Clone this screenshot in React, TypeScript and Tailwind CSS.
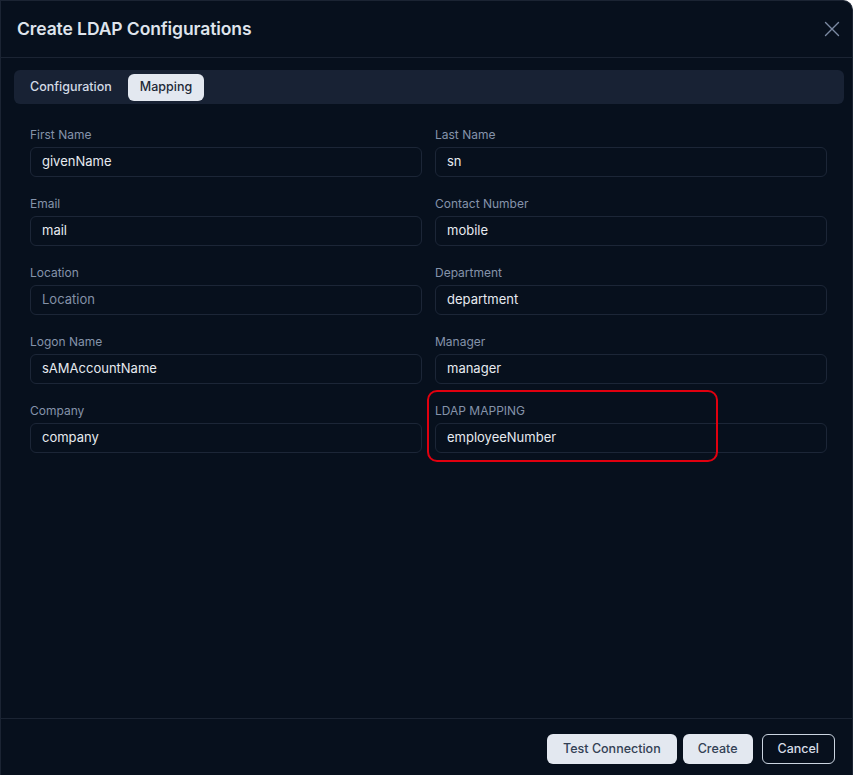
import React from "react";

const fields: { label: string; value: string; placeholder?: boolean }[][] = [
  [
    { label: "First Name", value: "givenName" },
    { label: "Last Name", value: "sn" },
  ],
  [
    { label: "Email", value: "mail" },
    { label: "Contact Number", value: "mobile" },
  ],
  [
    { label: "Location", value: "Location", placeholder: true },
    { label: "Department", value: "department" },
  ],
  [
    { label: "Logon Name", value: "sAMAccountName" },
    { label: "Manager", value: "manager" },
  ],
  [
    { label: "Company", value: "company" },
    { label: "LDAP MAPPING", value: "employeeNumber" },
  ],
];

function Field({ label, value, placeholder, highlight }: { label: string; value: string; placeholder?: boolean; highlight?: boolean }) {
  return (
    <div className="relative flex flex-col gap-[5px]">
      <label className="text-[12px] leading-[14px] text-[#8593aa]">{label}</label>
      <div className="h-[30px] rounded-md border border-[#1c2637] px-[11px] flex items-center">
        <span className={placeholder ? "text-[13px] text-[#8491a7]" : "text-[13px] text-[#e6eaf0]"}>{value}</span>
      </div>
      {highlight && (
        <div className="absolute left-[-8px] top-[-14px] w-[291px] h-[72px] rounded-[10px] border-[2.5px] border-[#e0000f] pointer-events-none" />
      )}
    </div>
  );
}

export default function App() {
  return (
    <div className="w-[853px] h-[775px] bg-white overflow-hidden" style={{ fontFamily: "Inter, 'Noto Sans', sans-serif" }}>
      <div className="w-[853px] h-[775px] bg-[#07101d] border border-b-0 border-[#1b2433] rounded-tr-[10px] flex flex-col">
        {/* Header */}
        <div className="h-[57px] flex items-center justify-between pl-[16px] pr-[8px] border-b border-[#1b2433] shrink-0">
          <h2 className="text-[17.5px] font-semibold text-[#dfe4ec] tracking-[-0.1px]">Create LDAP Configurations</h2>
          <button className="w-[24px] h-[24px] flex items-center justify-center text-[#7c8aa3]">
            <svg width="16" height="16" viewBox="0 0 16 16" fill="none" stroke="currentColor" strokeWidth="1.4" strokeLinecap="round">
              <path d="M1.5 1.5L14.5 14.5M14.5 1.5L1.5 14.5" />
            </svg>
          </button>
        </div>

        {/* Body */}
        <div className="flex-1 pl-[13px] pr-[8px] pt-[12px]">
          <div className="h-[34px] rounded-md bg-[#182234] flex items-center px-[3px] gap-[3px]">
            <div className="h-[27px] px-[13px] flex items-center text-[12.5px] font-medium text-[#d3dae5]">Configuration</div>
            <div className="h-[27px] px-[12px] flex items-center rounded-md bg-[#e3e8f0] text-[12.5px] font-medium text-[#1e2838]">Mapping</div>
          </div>

          <div className="pl-[16px] pr-[17px] pt-[24px] grid grid-cols-2 gap-x-[13px] gap-y-[20px]">
            {fields.flat().map((f) => (
              <Field key={f.label} label={f.label} value={f.value} placeholder={f.placeholder} highlight={f.label === "LDAP MAPPING"} />
            ))}
          </div>
        </div>

        {/* Footer */}
        <div className="h-[57px] border-t border-[#1b2433] flex items-start justify-end pr-[17px] pt-[15px] shrink-0">
          <button className="h-[30px] px-[16px] rounded-md bg-[#e3e8f0] text-[12.5px] font-medium text-[#334155]">Test Connection</button>
          <button className="h-[30px] px-[15px] ml-[6px] rounded-md bg-[#e3e8f0] text-[12.5px] font-medium text-[#334155]">Create</button>
          <button className="h-[30px] px-[15px] ml-[9px] rounded-md border border-[#cbd5e1] text-[12.5px] font-medium text-[#d6dce6]">Cancel</button>
        </div>
      </div>
    </div>
  );
}
